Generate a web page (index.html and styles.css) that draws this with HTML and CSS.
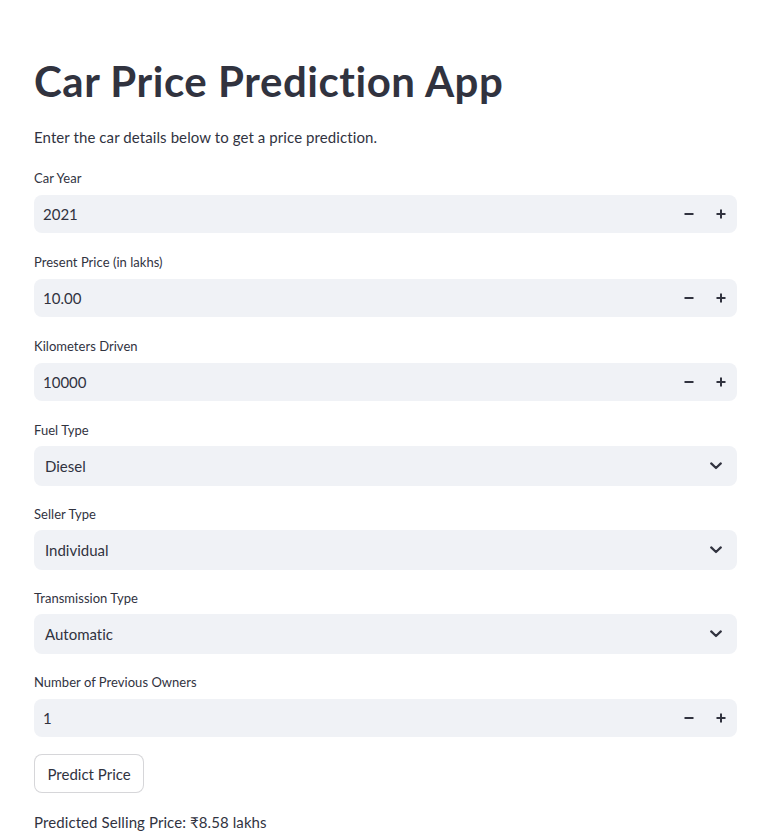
FILE: index.html
```html
<!DOCTYPE html>
<html lang="en">
<head>
<meta charset="utf-8">
<title>Car Price Prediction App</title>
<link rel="stylesheet" href="styles.css">
</head>
<body>
<main class="app">
  <h1 class="title">Car Price Prediction App</h1>
  <p class="intro">Enter the car details below to get a price prediction.</p>

  <div class="field field-num">
    <label class="label">Car Year</label>
    <div class="num-box">
      <span class="num-value">2021</span>
      <button class="step" aria-label="minus"><svg width="10" height="10" viewBox="0 0 10 10"><rect x="0.5" y="4" width="9" height="2" fill="#31333f"/></svg></button>
      <button class="step" aria-label="plus"><svg width="10" height="10" viewBox="0 0 10 10"><rect x="0.5" y="4" width="9" height="2" fill="#31333f"/><rect x="4" y="0.5" width="2" height="9" fill="#31333f"/></svg></button>
    </div>
  </div>

  <div class="field field-num">
    <label class="label">Present Price (in lakhs)</label>
    <div class="num-box">
      <span class="num-value">10.00</span>
      <button class="step" aria-label="minus"><svg width="10" height="10" viewBox="0 0 10 10"><rect x="0.5" y="4" width="9" height="2" fill="#31333f"/></svg></button>
      <button class="step" aria-label="plus"><svg width="10" height="10" viewBox="0 0 10 10"><rect x="0.5" y="4" width="9" height="2" fill="#31333f"/><rect x="4" y="0.5" width="2" height="9" fill="#31333f"/></svg></button>
    </div>
  </div>

  <div class="field field-num">
    <label class="label">Kilometers Driven</label>
    <div class="num-box">
      <span class="num-value">10000</span>
      <button class="step" aria-label="minus"><svg width="10" height="10" viewBox="0 0 10 10"><rect x="0.5" y="4" width="9" height="2" fill="#31333f"/></svg></button>
      <button class="step" aria-label="plus"><svg width="10" height="10" viewBox="0 0 10 10"><rect x="0.5" y="4" width="9" height="2" fill="#31333f"/><rect x="4" y="0.5" width="2" height="9" fill="#31333f"/></svg></button>
    </div>
  </div>

  <div class="field field-sel">
    <label class="label">Fuel Type</label>
    <div class="sel-box">
      <span class="sel-value">Diesel</span>
      <svg class="chev" width="12" height="8" viewBox="0 0 12 8"><polyline points="1.2,1.4 6,6 10.8,1.4" fill="none" stroke="#31333f" stroke-width="2.2" stroke-linecap="round" stroke-linejoin="round"/></svg>
    </div>
  </div>

  <div class="field field-sel">
    <label class="label">Seller Type</label>
    <div class="sel-box">
      <span class="sel-value">Individual</span>
      <svg class="chev" width="12" height="8" viewBox="0 0 12 8"><polyline points="1.2,1.4 6,6 10.8,1.4" fill="none" stroke="#31333f" stroke-width="2.2" stroke-linecap="round" stroke-linejoin="round"/></svg>
    </div>
  </div>

  <div class="field field-sel">
    <label class="label">Transmission Type</label>
    <div class="sel-box">
      <span class="sel-value">Automatic</span>
      <svg class="chev" width="12" height="8" viewBox="0 0 12 8"><polyline points="1.2,1.4 6,6 10.8,1.4" fill="none" stroke="#31333f" stroke-width="2.2" stroke-linecap="round" stroke-linejoin="round"/></svg>
    </div>
  </div>

  <div class="field field-num field-last">
    <label class="label">Number of Previous Owners</label>
    <div class="num-box">
      <span class="num-value">1</span>
      <button class="step" aria-label="minus"><svg width="10" height="10" viewBox="0 0 10 10"><rect x="0.5" y="4" width="9" height="2" fill="#31333f"/></svg></button>
      <button class="step" aria-label="plus"><svg width="10" height="10" viewBox="0 0 10 10"><rect x="0.5" y="4" width="9" height="2" fill="#31333f"/><rect x="4" y="0.5" width="2" height="9" fill="#31333f"/></svg></button>
    </div>
  </div>

  <button class="predict">Predict Price</button>
  <p class="result">Predicted Selling Price: ₹8.58 lakhs</p>
</main>
</body>
</html>
```
FILE: styles.css
```css
* { box-sizing: border-box; }
html, body { margin: 0; padding: 0; background: #ffffff; }
body {
  font-family: "Lato", "Noto Sans", sans-serif;
  font-variant-ligatures: none;
  color: #31333f;
  font-size: 15px;
}
.app {
  width: 703px;
  margin-left: 34px;
  padding-top: 55px;
  display: flex;
  flex-direction: column;
}
.title {
  margin: 0;
  font-size: 42px;
  line-height: 52px;
  font-weight: 700;
  letter-spacing: 0.55px;
}
.intro {
  margin: 18px 0 19px;
  font-size: 15px;
  line-height: 24px;
  letter-spacing: 0.09px;
}
.field { display: flex; flex-direction: column; }
.label {
  font-size: 13px;
  line-height: 20px;
  height: 20px;
  letter-spacing: 0.03px;
}
.field-num .label { margin-bottom: 7px; }
.field-num { margin-bottom: 19px; }
.field-sel .label { margin-bottom: 6px; }
.field-sel { margin-bottom: 18px; }
.field-last { margin-bottom: 17px; }
.num-box {
  height: 38px;
  background: #f0f2f6;
  border-radius: 8px;
  display: flex;
  align-items: center;
}
.num-value {
  flex: 1;
  padding-left: 9px;
  font-size: 15px;
}
.step {
  width: 32px;
  height: 38px;
  border: 0;
  padding: 0;
  background: transparent;
  display: flex;
  align-items: center;
  justify-content: center;
}
.sel-box {
  height: 40px;
  background: #f0f2f6;
  border-radius: 8px;
  display: flex;
  align-items: center;
  padding: 0 15px 0 11px;
}
.sel-value { flex: 1; font-size: 15px; }
.chev { display: block; }
.predict {
  align-self: flex-start;
  height: 39px;
  padding: 0 12.5px;
  background: #ffffff;
  border: 1px solid rgba(49, 51, 63, 0.2);
  border-radius: 8px;
  font-family: inherit;
  font-variant-ligatures: none;
  font-size: 15px;
  color: #31333f;
}
.result {
  margin: 17px 0 0;
  font-size: 15px;
  line-height: 24px;
  letter-spacing: 0.09px;
}
```
